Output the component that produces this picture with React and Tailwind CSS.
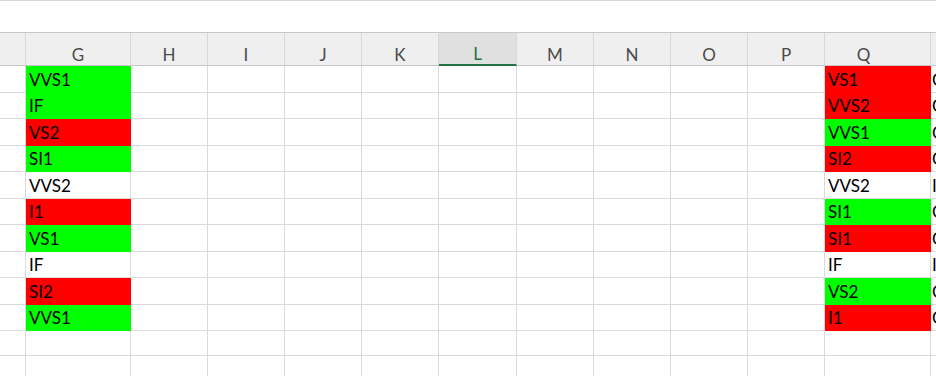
import React from "react";

const G = "bg-[#00ff00] border-[#00ff00]";
const R = "bg-[#ff0000] border-[#ff0000]";
const W = "bg-white border-[#dadada]";

const colG = [
  ["VVS1", G], ["IF", G], ["VS2", R], ["SI1", G], ["VVS2", W],
  ["I1", R], ["VS1", G], ["IF", W], ["SI2", R], ["VVS1", G],
];
const colQ = [
  ["VS1", R], ["VVS2", R], ["VVS1", G], ["SI2", R], ["VVS2", W],
  ["SI1", G], ["SI1", R], ["IF", W], ["VS2", G], ["I1", R],
];
const colR = ["Good", "Good", "Good", "Good", "Ideal", "Good", "Good", "Ideal", "Good", "Good"];

const heights = ["h-[27px]", "h-[26px]", "h-[27px]", "h-[26px]", "h-[27px]", "h-[26px]", "h-[27px]", "h-[26px]", "h-[27px]", "h-[26px]", "h-[25px]", "h-[27px]"];

const gridCols = "grid grid-cols-[26px_105px_77px_77px_77px_77px_78px_77px_77px_77px_77px_106px_5px]";

const headers = ["", "G", "H", "I", "J", "K", "L", "M", "N", "O", "P", "Q", ""];

export default function App() {
  return (
    <div className="w-[936px] h-[376px] overflow-hidden bg-white font-['Lato',sans-serif] text-[17px]">
      <div className="h-[32px] border-t border-[#d6d6d6] bg-white" />
      <div className={`${gridCols} h-[34px] border-t border-b border-[#c8c8c8] bg-[#efefef]`}>
        {headers.map((h, i) => {
          const isL = h === "L";
          return (
            <div
              key={i}
              className={
                "flex items-end justify-center leading-none pb-[2px] text-[#4a4a4a] " +
                (i < headers.length - 1 ? "border-r border-[#d8d8d8] " : "") +
                (isL ? "bg-[#e0e0e0] border-b-2 border-b-[#217346] text-[#217346] -mb-px " : "") +
                (h === "Q" ? "pr-[28px] " : "")
              }
            >
              {h}
            </div>
          );
        })}
      </div>
      {heights.map((hc, r) => {
        const g = colG[r];
        const q = colQ[r];
        return (
          <div key={r} className={`${gridCols} ${hc}`}>
            <div className="border-r border-b border-[#dadada]" />
            <div className={`border-r border-b flex items-end pl-[3px] pb-[4px] leading-none text-black ${g ? g[1] : W}`}>
              {g ? g[0] : ""}
            </div>
            {Array.from({ length: 9 }).map((_, c) => (
              <div key={c} className="border-r border-b border-[#dadada]" />
            ))}
            <div className={`border-r border-b flex items-end pl-[3px] pb-[4px] leading-none text-black ${q ? q[1] : W}`}>
              {q ? q[0] : ""}
            </div>
            <div className="border-b border-[#dadada] flex items-end pl-[1px] pb-[4px] leading-none text-black whitespace-nowrap overflow-hidden">
              {colR[r] || ""}
            </div>
          </div>
        );
      })}
    </div>
  );
}
